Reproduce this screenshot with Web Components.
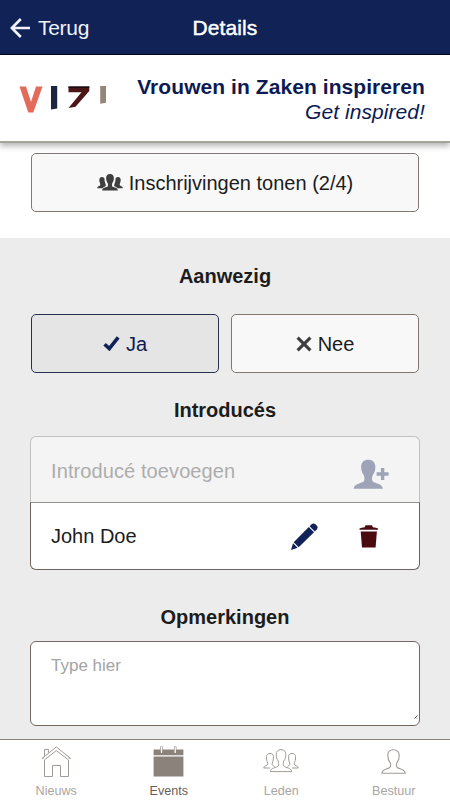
<!DOCTYPE html>
<html lang="nl">
<head>
<meta charset="utf-8">
<meta name="viewport" content="width=device-width, initial-scale=1">
<title>Details</title>
<style>
  body {
    margin: 0;
    font-family: "Liberation Sans", Arial, sans-serif;
    font-size: 20px;
    color: #1c1c1c;
  }
</style>
</head>
<body>
<event-page>
  <app-bar slot="header" back="Terug">Details</app-bar>
  <brand-banner slot="header">
    Vrouwen in Zaken inspireren
    <span slot="tagline">Get inspired!</span>
  </brand-banner>
  <page-section>
    <app-button icon="people">Inschrijvingen tonen (2/4)</app-button>
  </page-section>
  <page-section shaded>
    <section-title class="presence">Aanwezig</section-title>
    <button-row>
      <app-button icon="check" selected>Ja</app-button>
      <app-button icon="cross">Nee</app-button>
    </button-row>
    <section-title>Introducés</section-title>
    <guest-list placeholder="Introducé toevoegen">
      <guest-item>John Doe</guest-item>
    </guest-list>
    <section-title class="notes">Opmerkingen</section-title>
    <note-field>Type hier</note-field>
  </page-section>
  <tab-bar slot="footer">
    <tab-item icon="home">Nieuws</tab-item>
    <tab-item icon="calendar" active>Events</tab-item>
    <tab-item icon="members">Leden</tab-item>
    <tab-item icon="person">Bestuur</tab-item>
  </tab-bar>
</event-page>

<script>
const bust = "M12 .5C8.6.5 6.4 2.6 6.4 6C6.4 9 7.2 11.2 8.5 12.8C9.3 14.5 9.2 16.8 8.4 17.8C6 19.6 1 19.4.5 23.5H23.5C23 19.4 18 19.6 15.6 17.8C14.8 16.8 14.7 14.5 15.5 12.8C16.8 11.2 17.6 9 17.6 6C17.6 2.6 15.4.5 12 .5Z";

// each icon: [width, height, markup]
const icons = {
  back: [20, 20, `<path d="M10.8 1L1.8 10L10.8 19M2 10H20" fill="none" stroke="currentColor" stroke-width="2.7"/>`],
  people: [26, 17, `
    <g fill="currentColor">
      <path d="M5 3C3 3 2.2 4.3 2.3 6.5C2.4 8.5 3.5 9.4 3.3 11C2.7 12.2.3 12 0 14.2H5.5C6.5 12.8 8 12.8 8.8 12C9.2 10.2 7.4 8.5 7.5 5.2C7.5 4 6.6 3 5 3Z"/>
      <path d="M21 3C23 3 23.8 4.3 23.7 6.5C23.6 8.5 22.5 9.4 22.7 11C23.3 12.2 25.7 12 26 14.2H20.5C19.5 12.8 18 12.8 17.2 12C16.8 10.2 18.6 8.5 18.5 5.2C18.5 4 19.4 3 21 3Z"/>
      <path d="M13 0C10.2 0 9 1.8 9.1 4.5C9.2 7 10.4 8.5 10.9 9.5C11.2 11 11 12.2 10.4 12.7C8.5 13.6 5.4 13.5 5 16.6H21C20.6 13.5 17.5 13.6 15.6 12.7C15 12.2 14.8 11 15.1 9.5C15.6 8.5 16.8 7 16.9 4.5C17 1.8 15.8 0 13 0Z"/>
    </g>`],
  check: [17, 15, `<path d="M1.6 8.2L6.3 12.6L15.2 1.4" fill="none" stroke="currentColor" stroke-width="3.6"/>`],
  cross: [16, 16, `<path d="M1.6 1.6L14.4 14.4M14.4 1.6L1.6 14.4" fill="none" stroke="currentColor" stroke-width="3.2"/>`],
  addPerson: [36, 31, `
    <path d="${bust}" transform="scale(1.27)" fill="currentColor"/>
    <path d="M29.6 9V21M23.6 15H35.6" stroke="currentColor" stroke-width="3.4"/>`],
  pencil: [27, 27, `
    <g fill="currentColor">
      <path d="M0 27L2 20.2L6.6 24.8Z"/>
      <path d="M2.7 19.3L17.8 4L23 9.2L7.7 24.3Z"/>
      <path d="M18.6 3.2L20.8 1.1Q22.4-.3 24.2 1.1L25.9 2.8Q27.4 4.4 25.9 6.2L23.8 8.4Z"/>
    </g>`],
  trash: [20, 23, `
    <g fill="currentColor">
      <path d="M.5 4.7V3.4Q2 2.5 5.6 2.2L6.6.3H12.9L13.9 2.2Q17.5 2.5 19 3.4V4.7Z"/>
      <path d="M1.7 6.6H17.9L16.6 22.4H3Z"/>
    </g>`],
  home: [31, 31, `
    <g fill="none" stroke="currentColor">
      <path d="M1 12.5L15.3.9L29.6 12.5M1 12.5L3.3 11.6M29.6 12.5L27.3 11.6"/>
      <path d="M3.5 30.5V13.9L15.3 4.6L27.5 13.9V30.5H19.5V19.5H11.5V30.5Z"/>
      <path d="M3.5 9.8V3.5H7.5V6.6"/>
    </g>`],
  calendar: [31, 31, `
    <path d="M.6 3.5H30.4V9.3H.6ZM.6 10.5H30.4V30.5H.6Z" fill="currentColor"/>
    <path d="M8.5.6V7.3M22.2.6V7.3" stroke="currentColor" stroke-width="2.4"/>
    <path d="M8.5 1V7M22.2 1V7" stroke="#fff" stroke-width="1.3"/>`],
  members: [36, 25, `
    <g fill="none" stroke="currentColor">
      <path d="M11.5 17.6C10.6 17 9.4 16.6 9.2 15.4C9 13.6 10.4 12.4 10.4 9V7.4C10.4 5.4 9 4.4 7 4.4S3.5 5.6 3.5 7.6V10C3.5 12.2 4.9 13.3 4.8 15C4.4 17 1 16.4.7 19H6.8"/>
      <path d="M24.5 17.6C25.4 17 26.6 16.6 26.8 15.4C27 13.6 25.6 12.4 25.6 9V7.4C25.6 5.4 27 4.4 29 4.4S32.5 5.6 32.5 7.6V10C32.5 12.2 31.1 13.3 31.2 15C31.6 17 35 16.4 35.3 19H29.2"/>
      <path d="M18 .6C14.8.6 13.2 2.6 13.2 5.4C13.2 8.4 14 10.4 15.2 12C15.8 13.6 16 15.6 15.2 17C13.4 19 7.6 18.6 7.2 22.6H28.8C28.4 18.6 22.6 19 20.8 17C20 15.6 20.2 13.6 20.8 12C22 10.4 22.8 8.4 22.8 5.4C22.8 2.6 21.2.6 18 .6Z"/>
    </g>`],
  person: [25, 25, `<path d="${bust}" transform="translate(.3 .3) scale(1.02)" fill="none" stroke="currentColor" stroke-width="1.1"/>`],
};

class AppIcon extends HTMLElement {
  connectedCallback() {
    const [w, h, markup] = icons[this.getAttribute("name")];
    this.attachShadow({ mode: "open" }).innerHTML = `
      <style>
        :host { display: inline-flex; flex: none; }
      </style>
      <svg width="${w}" height="${h}" viewBox="0 0 ${w} ${h}">${markup}</svg>
    `;
  }
}

class EventPage extends HTMLElement {
  constructor() {
    super();
    this.attachShadow({ mode: "open" }).innerHTML = `
      <style>
        :host {
          display: flex;
          flex-direction: column;
          height: 800px;
          overflow: hidden;
          background: #fff;
        }
        main {
          flex: 1;
          min-height: 0;
          display: flex;
          flex-direction: column;
          overflow: hidden;
        }
      </style>
      <slot name="header"></slot>
      <main><slot></slot></main>
      <slot name="footer"></slot>
    `;
  }
}

class AppBar extends HTMLElement {
  connectedCallback() {
    this.attachShadow({ mode: "open" }).innerHTML = `
      <style>
        :host {
          display: grid;
          grid-template-columns: 1fr auto 1fr;
          align-items: center;
          flex: none;
          box-sizing: border-box;
          height: 55px;
          padding: 1px 10px 0;
          border-bottom: 1px solid #05091a;
          background: #102256;
          color: #fff;
          font-size: 21px;
        }
        .back {
          display: flex;
          align-items: center;
          gap: 8px;
          color: #f0f2f8;
          letter-spacing: -.3px;
        }
        .title { -webkit-text-stroke: .45px #fff; letter-spacing: .1px; }
      </style>
      <div class="back"><app-icon name="back"></app-icon><span>${this.getAttribute("back")}</span></div>
      <div class="title"><slot></slot></div>
    `;
  }
}

class BrandBanner extends HTMLElement {
  constructor() {
    super();
    this.attachShadow({ mode: "open" }).innerHTML = `
      <style>
        :host {
          display: flex;
          align-items: center;
          justify-content: space-between;
          flex: none;
          position: relative;
          z-index: 1;
          box-sizing: border-box;
          height: 88px;
          padding: 1px 25px 0 19px;
          border-bottom: 2px solid #a5a49b;
          box-shadow: 0 3px 6px rgb(0 0 0 / 30%);
          background: #fff;
          color: #0d1b52;
          font-size: 21px;
          line-height: 25px;
        }
        .name {
          text-align: right;
          font-weight: bold;
          letter-spacing: .07px;
        }
        .tagline { font-weight: normal; font-style: italic; }
      </style>
      <svg width="89" height="28" viewBox="0 0 89 28">
        <path d="M.5 1.5H7L12 17L17 1.5H23.5L14.3 27.5H9.3Z" fill="#e46a5a"/>
        <path d="M32 1H38.2V23.6L32 24.6Z" fill="#1b2740"/>
        <path d="M49.5 1.5H70.3V6L56.5 21.8L49.5 23L62.5 7.2H49.5Z" fill="#4a1716"/>
        <path d="M49.5 1.5H70.3V3H49.5Z" fill="#170d12"/>
        <path d="M81.2 1H87V17.8L81.2 18.8Z" fill="#93877a"/>
      </svg>
      <div class="name">
        <slot></slot>
        <div class="tagline"><slot name="tagline"></slot></div>
      </div>
    `;
  }
}

class PageSection extends HTMLElement {
  constructor() {
    super();
    this.attachShadow({ mode: "open" }).innerHTML = `
      <style>
        :host {
          display: flex;
          flex-direction: column;
          flex: none;
          box-sizing: border-box;
          height: 95px;
          padding: 10px 30px 0;
        }
        :host([shaded]) {
          flex: 1;
          height: auto;
          padding-top: 24px;
          background: #ececec;
        }
      </style>
      <slot></slot>
    `;
  }
}

class SectionTitle extends HTMLElement {
  constructor() {
    super();
    this.attachShadow({ mode: "open" }).innerHTML = `
      <style>
        :host {
          display: block;
          height: 28px;
          margin-bottom: 12px;
          line-height: 28px;
          font-weight: bold;
          text-align: center;
        }
        :host(.presence) { margin-bottom: 24px; }
        :host(.notes) { margin-top: 33px; margin-bottom: 10px; }
      </style>
      <slot></slot>
    `;
  }
}

class ButtonRow extends HTMLElement {
  constructor() {
    super();
    this.attachShadow({ mode: "open" }).innerHTML = `
      <style>
        :host {
          display: grid;
          grid-template-columns: 1fr 1fr;
          gap: 10px;
          margin-bottom: 23px;
        }
      </style>
      <slot></slot>
    `;
  }
}

class AppButton extends HTMLElement {
  connectedCallback() {
    this.attachShadow({ mode: "open" }).innerHTML = `
      <style>
        :host {
          display: flex;
          align-items: center;
          justify-content: center;
          gap: 6px;
          box-sizing: border-box;
          height: 59px;
          margin: 0 1px;
          padding-top: 2px;
          border: 1px solid #83776f;
          border-radius: 5px;
          background: #f8f8f8;
        }
        :host([selected]) {
          border-color: #2a3050;
          background: #e5e5e5;
          color: #0d1b52;
        }
        app-icon { color: #3f3f3f; margin-top: -2px; }
        :host([selected]) app-icon { color: #102256; }
      </style>
      <app-icon name="${this.getAttribute("icon")}"></app-icon>
      <span><slot></slot></span>
    `;
  }
}

class GuestList extends HTMLElement {
  connectedCallback() {
    this.attachShadow({ mode: "open" }).innerHTML = `
      <style>
        :host { display: block; }
        .add {
          display: flex;
          align-items: center;
          justify-content: space-between;
          box-sizing: border-box;
          height: 66px;
          padding: 3px 30px 0 20px;
          border: 1px solid #c2c0be;
          border-bottom: none;
          border-radius: 6px 6px 0 0;
          background: #f4f4f4;
          color: #adadad;
          letter-spacing: .1px;
        }
        app-icon { color: #9fa3b8; margin-top: 6px; }
      </style>
      <div class="add">
        <span>${this.getAttribute("placeholder")}</span>
        <app-icon name="addPerson"></app-icon>
      </div>
      <slot></slot>
    `;
  }
}

class GuestItem extends HTMLElement {
  constructor() {
    super();
    this.attachShadow({ mode: "open" }).innerHTML = `
      <style>
        :host {
          display: flex;
          align-items: center;
          box-sizing: border-box;
          height: 68px;
          padding: 1px 40px 0 20px;
          border: 1px solid #6f625a;
          border-top-color: #96928e;
          border-radius: 0 0 6px 6px;
          background: #fff;
        }
        span { flex: 1; }
        .edit { color: #102256; margin-right: 41px; }
        .delete { color: #4b0a10; }
      </style>
      <span><slot></slot></span>
      <app-icon class="edit" name="pencil"></app-icon>
      <app-icon class="delete" name="trash"></app-icon>
    `;
  }
}

class NoteField extends HTMLElement {
  constructor() {
    super();
    this.attachShadow({ mode: "open" }).innerHTML = `
      <style>
        :host {
          display: flex;
          justify-content: space-between;
          box-sizing: border-box;
          height: 85px;
          padding: 13px 1px 6px 20px;
          border: 1px solid #73675f;
          border-radius: 6px;
          background: #fff;
          color: #a3a3a3;
          font-size: 17px;
          line-height: 21px;
        }
        svg { align-self: flex-end; }
      </style>
      <span><slot></slot></span>
      <svg width="4" height="4" viewBox="0 0 4 4"><path d="M.5 3.5L3.5 .5M2.8 3.5L3.5 2.8" stroke="#555"/></svg>
    `;
  }
}

class TabBar extends HTMLElement {
  constructor() {
    super();
    this.attachShadow({ mode: "open" }).innerHTML = `
      <style>
        :host {
          display: grid;
          grid-template-columns: repeat(4, 1fr);
          flex: none;
          box-sizing: border-box;
          height: 61px;
          border-top: 1px solid #8a827c;
          background: #fff;
        }
      </style>
      <slot></slot>
    `;
  }
}

class TabItem extends HTMLElement {
  connectedCallback() {
    this.attachShadow({ mode: "open" }).innerHTML = `
      <style>
        :host {
          display: flex;
          flex-direction: column;
          align-items: center;
          padding-top: 6px;
          color: #aaa5a1;
          font-size: 12.6px;
          line-height: 15px;
        }
        :host([active]) { color: #6b5d55; }
        .icon {
          display: flex;
          align-items: center;
          height: 31px;
          margin-bottom: 7px;
          color: #a19b96;
        }
        :host([active]) .icon { color: #8c827c; }
      </style>
      <div class="icon"><app-icon name="${this.getAttribute("icon")}"></app-icon></div>
      <span><slot></slot></span>
    `;
  }
}

customElements.define("app-icon", AppIcon);
customElements.define("event-page", EventPage);
customElements.define("app-bar", AppBar);
customElements.define("brand-banner", BrandBanner);
customElements.define("page-section", PageSection);
customElements.define("section-title", SectionTitle);
customElements.define("button-row", ButtonRow);
customElements.define("app-button", AppButton);
customElements.define("guest-list", GuestList);
customElements.define("guest-item", GuestItem);
customElements.define("note-field", NoteField);
customElements.define("tab-bar", TabBar);
customElements.define("tab-item", TabItem);
</script>
</body>
</html>
